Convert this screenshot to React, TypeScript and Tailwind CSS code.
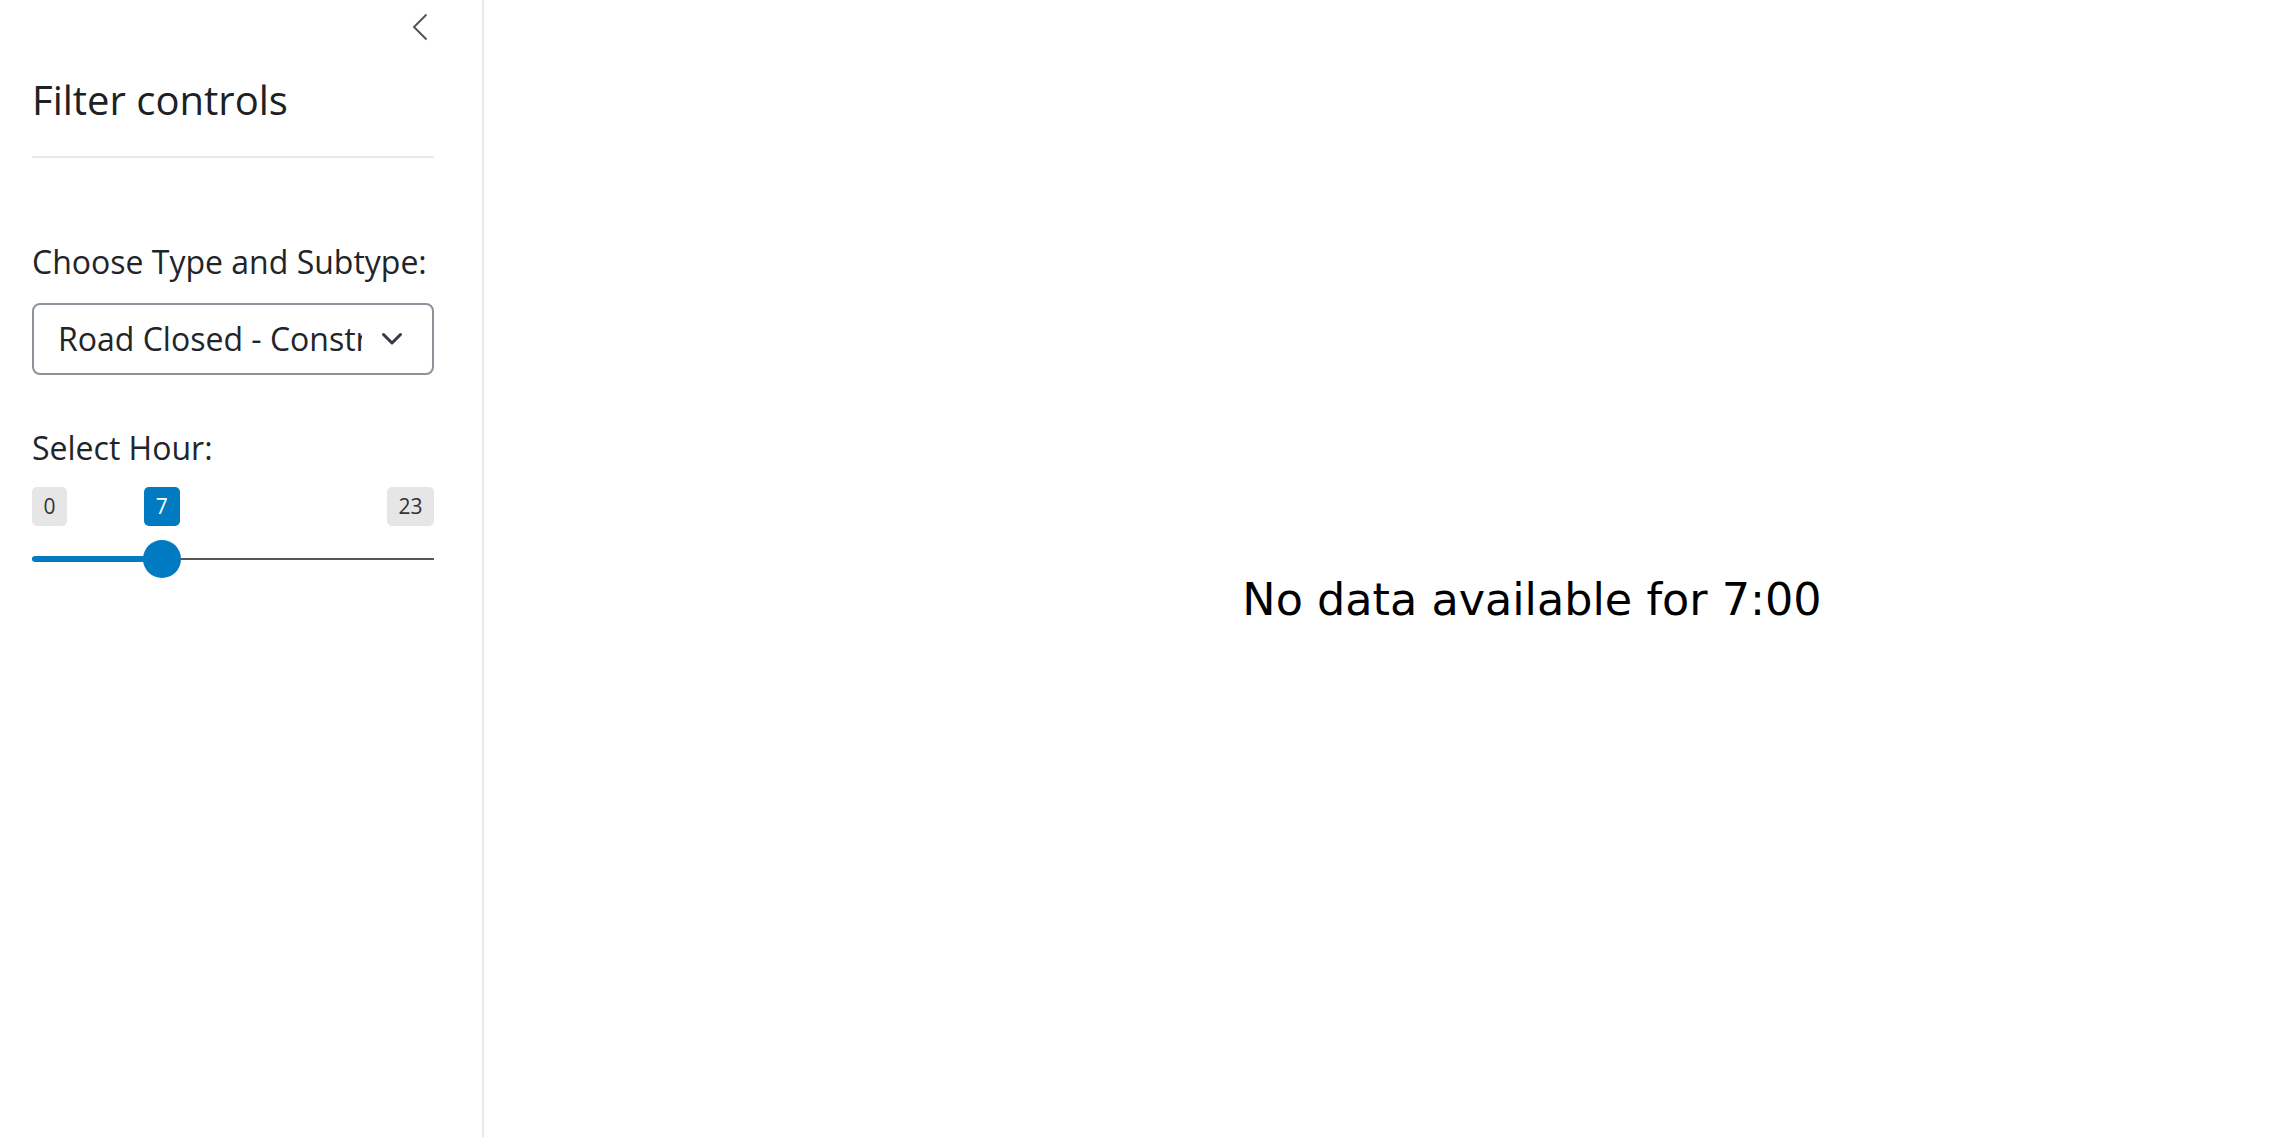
import React from "react";

const OPEN = { fontFamily: '"Open Sans", "Liberation Sans", sans-serif' };

function HourSlider({ value, min, max }: { value: number; min: number; max: number }) {
  const frac = (value - min) / (max - min);
  const handle = 38;
  const trackW = 402;
  const center = handle / 2 + frac * (trackW - handle);
  return (
    <div>
      <div className="relative flex h-[39px] justify-between">
        <div className="flex h-[39px] items-center rounded-[5px] bg-[#e6e6e6] px-[11.5px] text-[21px] text-[#333]">
          {min}
        </div>
        <div
          className="absolute top-0 flex h-[39px] -translate-x-1/2 items-center rounded-[5px] bg-[#007bc2] px-[12px] text-[21px] text-white"
          style={{ left: `${center}px` }}
        >
          {value}
        </div>
        <div className="flex h-[39px] items-center rounded-[5px] bg-[#e6e6e6] px-[11.5px] text-[21px] text-[#333]">
          {max}
        </div>
      </div>
      <div className="relative mt-[14px] h-[38px]">
        <div className="absolute left-0 right-0 top-[18px] h-[2px] bg-[#565656]" />
        <div
          className="absolute left-0 top-[16px] h-[6px] rounded-l-[3px] bg-[#007bc2]"
          style={{ width: `${center}px` }}
        />
        <div
          className="absolute top-0 h-[38px] w-[38px] -translate-x-1/2 rounded-full bg-[#007bc2]"
          style={{ left: `${center}px` }}
        />
      </div>
    </div>
  );
}

export default function App() {
  return (
    <div className="flex h-screen w-full bg-white text-[#212529]" style={OPEN}>
      <aside className="h-full w-[484px] shrink-0 border-r-2 border-[#e4e7eb] pl-[32px] pr-[48px]">
        <div className="flex justify-end pr-[7px] pt-[14px]">
          <svg width="14" height="26" viewBox="0 0 14 26" className="block overflow-visible">
            <path d="M13.5 0.5 L1 13 L13.5 25.5" fill="none" stroke="#555" strokeWidth="2" />
          </svg>
        </div>
        <h2 className="mt-[36px] text-[40px] font-normal leading-[48px] text-[#1d2125]">Filter controls</h2>
        <div className="mt-[32px] h-[2px] bg-[#e6e9ed]" />
        <div className="mt-[80px] text-[32px] leading-[48px]">Choose Type and Subtype:</div>
        <div className="mt-[17px] flex h-[72px] w-full items-center rounded-[8px] border-2 border-[#8c939b] pl-[24px] pr-[30px]">
          <div className="w-[304px] overflow-hidden whitespace-nowrap text-[32px] leading-[48px]">
            Road Closed - Construction
          </div>
          <svg width="20" height="12" viewBox="0 0 20 12" className="ml-[20px] block shrink-0 overflow-visible">
            <path d="M1.5 1.5 L10 10 L18.5 1.5" fill="none" stroke="#343a40" strokeWidth="3" strokeLinecap="round" strokeLinejoin="round" />
          </svg>
        </div>
        <div className="mt-[49px] text-[32px] leading-[48px]">Select Hour:</div>
        <div className="mt-[15px]">
          <HourSlider value={7} min={0} max={23} />
        </div>
      </aside>
      <main className="h-full flex-1">
        <div className="flex justify-center pl-[303px] pt-[578px]">
          <div
            className="whitespace-nowrap text-[44.5px] leading-none text-black"
            style={{ fontFamily: '"DejaVu Sans", sans-serif' }}
          >
            No data available for 7:00
          </div>
        </div>
      </main>
    </div>
  );
}
